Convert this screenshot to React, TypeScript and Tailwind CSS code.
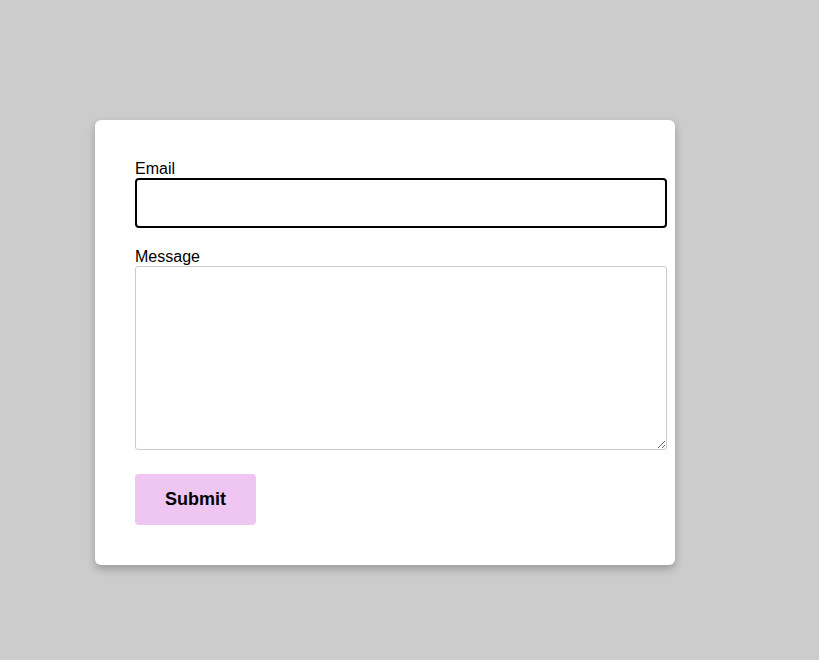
import React from 'react';

export default function App() {
  return (
    <div className="min-h-[660px] w-full bg-[#cccccc] pt-[120px] pl-[95px] font-['Liberation_Sans',Arial,sans-serif] text-black">
      <form
        className="flex w-[580px] flex-col rounded-[6px] bg-white p-[40px] pr-[8px] shadow-[0_4px_8px_rgba(0,0,0,0.25)]"
        onSubmit={(e) => e.preventDefault()}
      >
        <label htmlFor="email" className="block text-[16px] leading-[18px]">Email</label>
        <input
          id="email"
          type="email"
          className="block h-[50px] w-[532px] rounded-[4px] border-2 border-black bg-white px-3 outline-none"
        />
        <label htmlFor="message" className="mt-[20px] block text-[16px] leading-[18px]">Message</label>
        <textarea
          id="message"
          className="block h-[184px] w-[532px] rounded-[3px] border border-[#cccccc] bg-white px-3 py-2 outline-none"
        />
        <button
          type="submit"
          className="mt-[24px] h-[51px] w-[121px] rounded-[4px] bg-[#efc6f2] text-[18px] font-bold"
        >
          Submit
        </button>
      </form>
    </div>
  );
}
